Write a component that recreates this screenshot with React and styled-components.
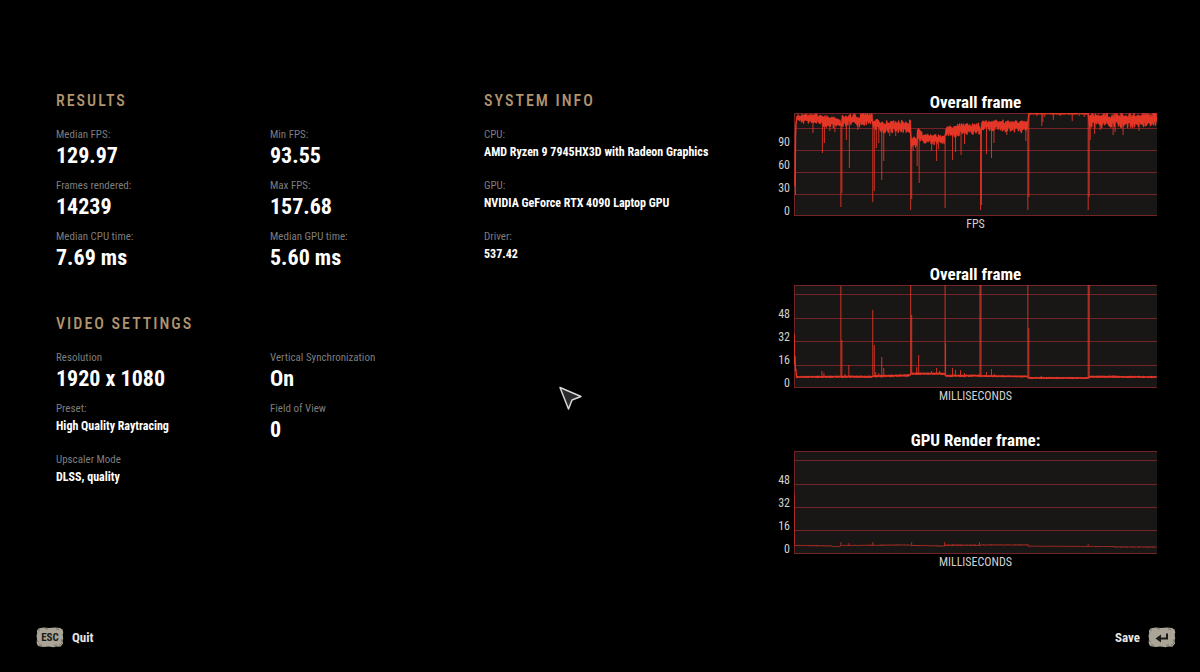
import React from "react";
import styled, { createGlobalStyle } from "styled-components";

const GlobalStyle = createGlobalStyle`
  * { box-sizing: border-box; }
  body {
    margin: 0;
    background: #000;
    color: #fff;
    font-family: "Roboto Condensed", "Liberation Sans Narrow", Roboto, sans-serif;
  }
`;

const Page = styled.div`
  display: flex;
  flex-direction: column;
  min-height: 100vh;
`;

const Content = styled.main`
  display: grid;
  grid-template-columns: minmax(0, 428fr) minmax(0, 293fr) minmax(0, 380fr);
  align-items: start;
  padding: 89px 43px 24px 56px;
`;

const Stack = styled.div`
  display: flex;
  flex-direction: column;
  gap: 41px;
`;

const Heading = styled.h2`
  margin: 0 0 14px;
  font-size: 16px;
  line-height: 24px;
  font-weight: 500;
  letter-spacing: 2px;
  text-transform: uppercase;
  color: #b0946f;
`;

const Facts = styled.dl`
  display: grid;
  grid-template-columns: repeat(${(p) => p.$columns}, minmax(0, 1fr));
  row-gap: 9px;
  margin: 0;
`;

const Fact = styled.div`
  min-height: 42px;
`;

const Label = styled.dt`
  font-size: 11px;
  line-height: 16px;
  color: #7d7d7d;
`;

const Value = styled.dd`
  margin: 0;
  font-weight: 700;
  font-size: ${(p) => (p.$small ? 12 : 22)}px;
  line-height: ${(p) => (p.$small ? 18 : 26)}px;
  white-space: nowrap;
`;

const Charts = styled.div`
  display: flex;
  flex-direction: column;
  padding-top: 3px;
`;

const Figure = styled.figure`
  display: grid;
  grid-template-columns: 13px minmax(0, 1fr);
  column-gap: 4px;
  margin: 0 0 ${(p) => p.$space}px;
`;

const Title = styled.h3`
  grid-column: 2;
  margin: 0;
  font-size: 17px;
  line-height: 21px;
  font-weight: 700;
  text-align: center;
`;

const Axis = styled.div`
  display: flex;
  flex-direction: column;
  justify-content: flex-end;
  gap: 13px;
  font-size: 12px;
  line-height: 10px;
  text-align: right;
  color: #d0d0d0;
`;

const Plot = styled.svg`
  display: block;
  width: 100%;
  height: 103px;
  background: #191716;
`;

const Caption = styled.figcaption`
  grid-column: 2;
  font-size: 12px;
  line-height: 16px;
  text-align: center;
  color: #d0d0d0;
`;

const Footer = styled.footer`
  display: flex;
  justify-content: space-between;
  margin-top: auto;
  padding: 0 24px 24px 36px;
`;

const Action = styled.button`
  display: flex;
  align-items: center;
  gap: 8px;
  padding: 0;
  border: 0;
  background: none;
  color: #e6e6e6;
  font-family: inherit;
  font-size: 13px;
  line-height: 21px;
  font-weight: 700;
  cursor: pointer;
`;

const KeyCap = styled.span`
  display: grid;
  place-items: center;
  width: 28px;
  height: 21px;
  font-size: 11px;
  color: #1c1a17;

  > * { grid-area: 1 / 1; }
`;

const KeyText = styled.span`
  position: relative;
`;

const Pointer = styled.svg`
  position: fixed;
  left: 558px;
  top: 385px;
  pointer-events: none;
`;

/* Repeatable noise, so the traces look the same on every load. */
const noise = (n) => {
  const v = Math.sin(n * 127.1 + 11.7) * 43758.5453;
  return v - Math.floor(v);
};

/* bands: [fromX, toX, topStart, bottomStart, topEnd, bottomEnd]; spikes: [x, y] */
const trace = (bands, spikes) => {
  const points = [];
  bands.forEach(([x0, x1, t0, b0, t1, b1]) => {
    for (let x = x0, i = 0; x <= x1; x += 0.5, i += 1) {
      const k = (x - x0) / (x1 - x0 || 1);
      const top = t0 + (t1 - t0) * k;
      const bottom = b0 + (b1 - b0) * k;
      const h = bottom - top;
      const r = noise(x * 2 + t0);
      const y = i % 2 ? top + h * 0.35 * r : bottom - h * 0.45 * r;
      points.push([x, Math.max(0.5, y)]);
    }
  });
  const line = points.map(([x, y], i) => `${i ? "L" : "M"}${x} ${y.toFixed(1)}`).join("");
  const baseAt = (x) => {
    const near = points.reduce((a, b) => (Math.abs(b[0] - x) < Math.abs(a[0] - x) ? b : a));
    return near[1];
  };
  return { line, spikes: spikes.map(([x, y]) => `M${x} ${baseAt(x).toFixed(1)}V${y}`).join("") };
};

const fps = {
  title: "Overall frame",
  unit: "FPS",
  ticks: [90, 60, 30, 0],
  grid: [15, 37, 59, 81],
  weight: 1.5,
  ...trace(
    [
      [1, 2, 40, 82, 4, 12],
      [2.5, 24, 1, 10, 1, 11],
      [24.5, 46.5, 2, 13, 4, 16],
      [48, 62, 2, 14, 1, 11],
      [62.5, 66, 4, 16, 4, 14],
      [66.5, 78.5, 0, 12, 0, 12],
      [80, 86, 5, 18, 8, 17],
      [86.5, 116, 8, 20, 7, 20],
      [118, 123, 24, 34, 24, 34],
      [123.5, 128, 15, 30, 16, 27],
      [128.5, 151, 21, 31, 22, 32],
      [152, 163, 12, 24, 13, 25],
      [163.5, 186.5, 11, 23, 10, 22],
      [188, 234, 6, 17, 8, 20],
      [235.5, 295, 0, 1, 0, 1],
      [296.5, 363.5, 0, 15, 0, 14],
    ],
    [
      [1.5, 82], [19, 20], [28.5, 40], [30.5, 30], [36, 18], [41, 19], [47, 94], [48, 80], [52.5, 27], [55.5, 55],
      [64, 17], [79, 89], [80.5, 78], [82.5, 35], [85, 30], [88, 67], [90, 48], [96, 23], [102, 23],
      [117, 97], [118, 86], [119.5, 38], [123.5, 53], [125.5, 70], [138, 38], [143, 48], [145, 36],
      [151.5, 95], [159, 47], [162, 39], [167.5, 42], [171, 31], [187, 97], [188, 92], [193, 41], [198, 45],
      [200.5, 30], [213.5, 22], [232.5, 28], [234.5, 97], [235.5, 84], [243.5, 3], [248.5, 13], [249.5, 9],
      [251.5, 4], [260, 7], [267, 3], [279, 8], [286, 3], [291, 4], [295, 97], [296, 84], [297, 27],
      [301.5, 21], [307, 17], [320, 22], [322, 19], [330, 22], [346, 18],
    ]
  ),
};

const frame = {
  title: "Overall frame",
  unit: "MILLISECONDS",
  ticks: [48, 32, 16, 0],
  grid: [9, 33, 56, 80],
  weight: 1.3,
  ...trace(
    [
      [0.5, 2, 60, 80, 84, 92],
      [2.5, 46, 91.5, 92.5, 91, 92.5],
      [47, 78, 91, 92.5, 91, 92.5],
      [79, 116, 90.5, 92, 89.5, 91.5],
      [117, 151, 88, 89.5, 88, 89.5],
      [152, 187, 90, 91.5, 90, 91.5],
      [188, 234, 90.5, 91.5, 91, 92],
      [235, 295, 92.5, 93.5, 92.5, 93.5],
      [296, 363.5, 91, 92.5, 91.5, 92.5],
    ],
    [
      [0.5, 49], [28, 86], [30, 88], [47, 1], [48, 55], [51, 89], [55, 80], [79, 25], [80.5, 60], [82, 87],
      [85, 88], [88, 72], [90, 83], [117, 0], [118, 30], [123, 82], [125, 70], [138, 86], [143, 83],
      [146, 86], [151.5, 0], [152, 58], [159, 83], [162, 85], [167, 85], [171, 88], [186.5, 0], [187.5, 0],
      [193, 87], [198, 84], [201, 89], [234.5, 0], [235.5, 43], [248, 91], [295, 0], [296, 0], [320, 90],
    ]
  ),
};

const render = {
  title: "GPU Render frame:",
  unit: "MILLISECONDS",
  ticks: [48, 32, 16, 0],
  grid: [9, 33, 56, 79],
  weight: 1,
  ...trace(
    [
      [1, 38, 94, 95, 94.5, 95.5],
      [38.5, 46, 95, 96, 95, 96],
      [47, 116, 94, 95, 93.5, 94.5],
      [117, 150, 94, 95, 94.5, 95.5],
      [151, 187, 93.5, 95, 93.5, 95],
      [187.5, 235, 93.5, 94.5, 93.5, 94.5],
      [235.5, 320, 95, 95.5, 95, 96],
      [320.5, 363.5, 95.5, 96.5, 95.5, 96.5],
    ],
    [[0.5, 42], [47, 91], [55, 92], [79, 91], [88, 93], [118, 91], [151, 91], [155, 93], [186, 91], [295, 93]]
  ),
};

function Chart({ data, space }) {
  return (
    <Figure $space={space}>
      <Title>{data.title}</Title>
      <Axis>
        {data.ticks.map((t) => (
          <span key={t}>{t}</span>
        ))}
      </Axis>
      <Plot viewBox="0 0 364 103" preserveAspectRatio="none" role="img" aria-label={`${data.title} ${data.unit}`}>
        <g stroke="#742326" strokeWidth="1">
          {[0, ...data.grid, 102].map((y) => (
            <path key={y} d={`M0 ${y + 0.5}H364`} />
          ))}
          <path d="M.5 0V103" />
        </g>
        <g fill="none" stroke={data.weight === 1 ? "#b02d25" : "#e43626"} strokeLinejoin="round">
          <path d={data.spikes} strokeWidth="1" opacity=".9" />
          <path d={data.line} strokeWidth={data.weight} />
        </g>
      </Plot>
      <Caption>{data.unit}</Caption>
    </Figure>
  );
}

function FactList({ items, columns = 1 }) {
  return (
    <Facts $columns={columns}>
      {items.map(([label, value, small]) => (
        <Fact key={label}>
          <Label>{label}</Label>
          <Value $small={small}>{value}</Value>
        </Fact>
      ))}
    </Facts>
  );
}

function Key({ children }) {
  return (
    <KeyCap>
      <svg width="28" height="21" viewBox="0 0 28 21" aria-hidden="true">
        <path
          fill="#aaa596"
          d="M3 1.2 8 .6l5 .5 6-.6 5 .6 2.6 1.3.7 3-.6 2 .5 4-.6 2.4.4 3-1.6 1.6-1 1.4-4-.4-3 .8-5-.6-5 .5-4.5-.8-1.6-1.4L.6 15l.5-3-.6-3 .7-3-.3-2.6z"
        />
        <path
          fill="none"
          stroke="#6d685b"
          strokeWidth=".8"
          d="M2 4l2-1.400M9 1.600l3 .5M20 2l3 .5M1.500 13l1 2.500M3 17.500l3 1M18 18.500l3-.8M23 18.500l3-2.500M26 12l-.8 3"
        />
      </svg>
      {children}
    </KeyCap>
  );
}

export default function App() {
  return (
    <Page>
      <GlobalStyle />
      <Content>
        <Stack>
          <section>
            <Heading>Results</Heading>
            <FactList
              columns={2}
              items={[
                ["Median FPS:", "129.97"],
                ["Min FPS:", "93.55"],
                ["Frames rendered:", "14239"],
                ["Max FPS:", "157.68"],
                ["Median CPU time:", "7.69 ms"],
                ["Median GPU time:", "5.60 ms"],
              ]}
            />
          </section>
          <section>
            <Heading>Video settings</Heading>
            <FactList
              columns={2}
              items={[
                ["Resolution", "1920 x 1080"],
                ["Vertical Synchronization", "On"],
                ["Preset:", "High Quality Raytracing", true],
                ["Field of View", "0"],
                ["Upscaler Mode", "DLSS, quality", true],
              ]}
            />
          </section>
        </Stack>
        <section>
          <Heading>System info</Heading>
          <FactList
            items={[
              ["CPU:", "AMD Ryzen 9 7945HX3D with Radeon Graphics", true],
              ["GPU:", "NVIDIA GeForce RTX 4090 Laptop GPU", true],
              ["Driver:", "537.42", true],
            ]}
          />
        </section>
        <Charts>
          <Chart data={fps} space={32} />
          <Chart data={frame} space={26} />
          <Chart data={render} space={0} />
        </Charts>
      </Content>
      <Footer>
        <Action type="button">
          <Key>
            <KeyText>ESC</KeyText>
          </Key>
          Quit
        </Action>
        <Action type="button">
          Save
          <Key>
            <svg width="14" height="12" viewBox="0 0 14 12" aria-hidden="true">
              <path d="M12 1.500v5H4" fill="none" stroke="#1c1a17" strokeWidth="2" />
              <path d="M.5 6.500 6 2.500v8z" fill="#1c1a17" />
            </svg>
          </Key>
        </Action>
      </Footer>
      <Pointer width="26" height="28" viewBox="0 0 26 28" aria-hidden="true">
        <path d="M2 2.500 23 11.500 14 15 10.500 24z" fill="#2b2b2d" stroke="#d8d8d8" strokeWidth="1.500" strokeLinejoin="round" />
      </Pointer>
    </Page>
  );
}
